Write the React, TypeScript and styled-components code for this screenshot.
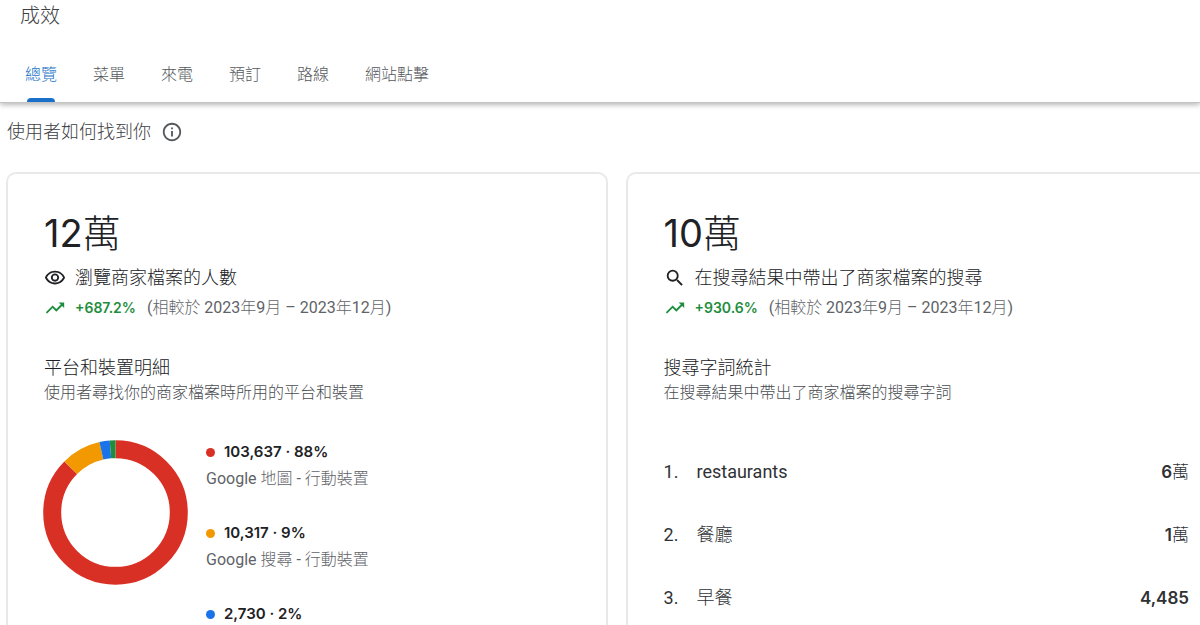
import React from 'react';
import styled, { createGlobalStyle } from 'styled-components';
import {
  MdInfoOutline,
  MdOutlineVisibility,
  MdSearch,
  MdTrendingUp,
} from 'react-icons/md';

const GlobalStyle = createGlobalStyle`
  *, *::before, *::after { box-sizing: border-box; }
  body {
    margin: 0;
    background: #fff;
    color: #3c4043;
    font-family: Roboto, 'Noto Sans CJK TC', sans-serif;
    font-size: 16px;
    line-height: 24px;
  }
  h1, h2, h3, p, ul, ol { margin: 0; padding: 0; font-weight: 400; }
  ul, ol { list-style: none; }
`;

const Page = styled.div`
  display: flex;
  flex-direction: column;
  height: 100vh;
  overflow: hidden;
`;

const Header = styled.header`
  flex: none;
  border-bottom: 1px solid #c4c4c4;
  box-shadow: 0 2px 5px rgba(0, 0, 0, 0.28);
`;

const Title = styled.h1`
  padding: 0 20px;
  font-size: 20px;
  line-height: 32px;
  font-weight: 300;
  color: #3c4043;
`;

const Tabs = styled.nav`
  display: flex;
  gap: 36px;
  padding: 28px 25px 0;
`;

const Tab = styled.button<{ $active?: boolean }>`
  display: flex;
  flex-direction: column;
  align-items: center;
  justify-content: space-between;
  height: 42px;
  padding: 3px 0 0;
  border: 0;
  background: none;
  font: inherit;
  font-weight: 300;
  color: ${(p) => (p.$active ? '#1a73c8' : '#55585c')};
  cursor: pointer;

  &::after {
    content: '';
    width: 28px;
    height: 4px;
    border-radius: 4px 4px 0 0;
    background: ${(p) => (p.$active ? '#1a6fc9' : 'transparent')};
  }
`;

const SectionHeading = styled.div`
  display: flex;
  align-items: center;
  gap: 10px;
  padding: 17px 7px 0;
  color: #3c4043;

  h2 {
    font-size: 18px;
    line-height: 24px;
    font-weight: 300;
  }
`;

const Cards = styled.main`
  flex: 1;
  display: grid;
  grid-template-columns: 1fr 1fr;
  gap: 18px;
  margin: 28px -27px 0 6px;
`;

const Card = styled.section`
  min-width: 0;
  padding: 35px 36px 0;
  border: 2px solid #e8e9eb;
  border-bottom: 0;
  border-radius: 10px 10px 0 0;
`;

const Figure = styled.p`
  margin-bottom: 3px;
  font-family: Inter, 'Noto Sans CJK TC', sans-serif;
  font-size: 38px;
  line-height: 48px;
  font-weight: 300;
  color: #202124;

  b { font-weight: 400; }
`;

const IconRow = styled.div`
  display: grid;
  grid-template-columns: 22px 1fr;
  align-items: center;
  gap: 9px;
  color: #202124;
`;

const Metric = styled.h3`
  font-size: 18px;
  line-height: 36px;
  font-weight: 300;
  color: #202124;
`;

const Change = styled.p`
  display: flex;
  gap: 11px;
  color: #5f6368;
  font-weight: 300;
  white-space: nowrap;
`;

const Growth = styled.strong`
  font-family: Inter, sans-serif;
  font-size: 14px;
  font-weight: 600;
  color: #1e8e3e;
`;

const Regular = styled.span`
  font-weight: 400;
`;

const Breakdown = styled.div`
  padding-top: 35px;

  h3 {
    font-size: 18px;
    line-height: 26px;
    font-weight: 300;
    color: #202124;
  }
  p {
    font-weight: 300;
    color: #4a4d51;
  }
`;

const Devices = styled.div`
  display: flex;
  align-items: flex-start;
  gap: 18px;
  margin-left: -1px;
  padding-top: 35px;
`;

const Donut = styled.svg`
  flex: none;
  width: 145px;
  height: 145px;
`;

const Legend = styled.ul`
  display: grid;
  gap: 27px;
`;

const LegendValue = styled.div<{ $color: string }>`
  display: flex;
  align-items: center;
  gap: 9px;
  font-family: Inter, sans-serif;
  font-size: 15px;
  line-height: 24px;
  font-weight: 600;
  color: #202124;

  &::before {
    content: '';
    width: 9px;
    height: 9px;
    border-radius: 50%;
    background: ${(p) => p.$color};
  }
`;

const LegendLabel = styled.div`
  line-height: 30px;
  color: #5f6368;
`;

const Terms = styled.ol`
  display: grid;
  gap: 3px;
  padding-top: 37px;
`;

const Term = styled.li`
  display: grid;
  grid-template-columns: 33px 1fr auto;
  align-items: baseline;
  font-size: 18px;
  line-height: 60px;
  color: #303134;
`;

const TermValue = styled.span`
  font-family: Inter, 'Noto Sans CJK TC', sans-serif;
  font-size: 17px;
  font-weight: 300;

  b { font-weight: 600; }
`;

const Light = styled.span`
  font-family: 'Noto Sans CJK TC', sans-serif;
  font-weight: 300;
  line-height: 1;
`;

const tabs = ['總覽', '菜單', '來電', '預訂', '路線', '網站點擊'];

const devices = [
  { color: '#d93025', value: '103,637 · 88%', name: '地圖', label: '行動裝置', share: 87.5 },
  { color: '#f29900', value: '10,317 · 9%', name: '搜尋', label: '行動裝置', share: 8.9 },
  { color: '#1a73e8', value: '2,730 · 2%', share: 2.3 },
];
const slices = [...devices, { color: '#1e8e3e', share: 1.3 }];

const terms = [
  { term: 'restaurants', amount: '6', unit: '萬' },
  { term: '餐廳', cjk: true, amount: '1', unit: '萬' },
  { term: '早餐', cjk: true, amount: '4,485' },
];

function DeviceChart() {
  let start = 0;
  return (
    <Donut viewBox="0 0 145 145" role="img" aria-label="平台和裝置明細">
      <g fill="none" strokeWidth="18" transform="rotate(-90 72.5 72.5)">
        {slices.map((s) => {
          const offset = -start;
          start += s.share;
          return (
            <circle
              key={s.color}
              cx="72.5"
              cy="72.5"
              r="63.3"
              pathLength={100}
              stroke={s.color}
              strokeDasharray={`${s.share} ${100 - s.share}`}
              strokeDashoffset={offset}
            />
          );
        })}
      </g>
    </Donut>
  );
}

function Summary(props: {
  amount: string;
  icon: React.ReactNode;
  metric: string;
  growth: string;
}) {
  return (
    <>
      <Figure>
        <b>{props.amount}</b>萬
      </Figure>
      <IconRow>
        {props.icon}
        <Metric>{props.metric}</Metric>
      </IconRow>
      <IconRow>
        <MdTrendingUp size={22} color="#1e8e3e" />
        <Change>
          <Growth>{props.growth}</Growth>
          <span>
            <Regular>(</Regular>相較於 <Regular>2023</Regular>年<Regular>9</Regular>月{' '}
            <Regular>– 2023</Regular>年<Regular>12</Regular>月<Regular>)</Regular>
          </span>
        </Change>
      </IconRow>
    </>
  );
}

export default function App() {
  return (
    <Page>
      <GlobalStyle />
      <Header>
        <Title>成效</Title>
        <Tabs>
          {tabs.map((t, i) => (
            <Tab key={t} type="button" $active={i === 0}>
              {t}
            </Tab>
          ))}
        </Tabs>
      </Header>
      <SectionHeading>
        <h2>使用者如何找到你</h2>
        <MdInfoOutline size={22} color="#55585c" />
      </SectionHeading>
      <Cards>
        <Card>
          <Summary
            amount="12"
            icon={<MdOutlineVisibility size={22} />}
            metric="瀏覽商家檔案的人數"
            growth="+687.2%"
          />
          <Breakdown>
            <h3>平台和裝置明細</h3>
            <p>使用者尋找你的商家檔案時所用的平台和裝置</p>
          </Breakdown>
          <Devices>
            <DeviceChart />
            <Legend>
              {devices.map((d) => (
                <li key={d.color}>
                  <LegendValue $color={d.color}>{d.value}</LegendValue>
                  {d.name && (
                    <LegendLabel>
                      Google <Light>{d.name}</Light> - <Light>{d.label}</Light>
                    </LegendLabel>
                  )}
                </li>
              ))}
            </Legend>
          </Devices>
        </Card>
        <Card>
          <Summary
            amount="10"
            icon={<MdSearch size={22} />}
            metric="在搜尋結果中帶出了商家檔案的搜尋"
            growth="+930.6%"
          />
          <Breakdown>
            <h3>搜尋字詞統計</h3>
            <p>在搜尋結果中帶出了商家檔案的搜尋字詞</p>
          </Breakdown>
          <Terms>
            {terms.map((t, i) => (
              <Term key={t.term}>
                <span>{i + 1}.</span>
                {t.cjk ? <Light>{t.term}</Light> : <span>{t.term}</span>}
                <TermValue>
                  <b>{t.amount}</b>
                  {t.unit}
                </TermValue>
              </Term>
            ))}
          </Terms>
        </Card>
      </Cards>
    </Page>
  );
}
